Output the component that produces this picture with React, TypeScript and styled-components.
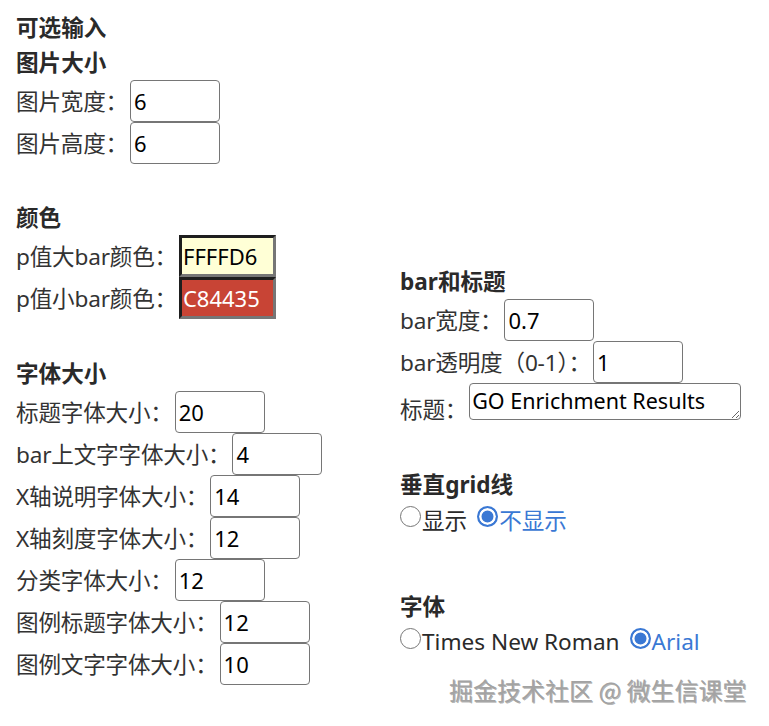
import React from "react";
import styled, { createGlobalStyle } from "styled-components";

const Global = createGlobalStyle`
  html, body { margin: 0; padding: 0; background: #fff; }
  body {
    font-family: "Noto Sans", "Noto Sans CJK SC", sans-serif;
    color: #333;
  }
`;

const Page = styled.div`
  position: relative;
  box-sizing: border-box;
  width: 769px;
  height: 726px;
  padding: 10px 0 0 16px;
  display: grid;
  grid-template-columns: 384px 1fr;
  overflow: hidden;
`;

const Column = styled.div<{ $top?: number }>`
  display: flex;
  flex-direction: column;
  padding-top: ${(p) => p.$top ?? 0}px;
`;

const Heading = styled.div`
  font-weight: 700;
  font-size: 22.6px;
  line-height: 35px;
  height: 35px;
  color: #2a2a2a;
  white-space: nowrap;
`;

const Spacer = styled.div<{ $h: number }>`
  height: ${(p) => p.$h}px;
  flex: none;
`;

const Row = styled.div<{ $align?: string }>`
  display: flex;
  align-items: ${(p) => p.$align ?? "center"};
  gap: 2px;
  min-height: 42px;
`;

const Label = styled.label<{ $offset?: number }>`
  font-size: 22.6px;
  line-height: 35px;
  white-space: nowrap;
  letter-spacing: -0.2px;
  margin-top: ${(p) => p.$offset ?? 0}px;
`;

const NumInput = styled.input`
  box-sizing: border-box;
  width: 90px;
  height: 42px;
  border: 1px solid #767676;
  border-radius: 4px;
  padding: 0 3px;
  font-family: "Noto Sans", sans-serif;
  font-size: 22px;
  color: #000;
  background: #fff;
  outline: none;
`;

const ColorInput = styled.input<{ $bg: string; $fg: string }>`
  box-sizing: border-box;
  width: 97px;
  height: 42px;
  border: 3px solid;
  border-color: #1e1e1e #767676 #767676 #1e1e1e;
  padding: 0 1px;
  font-family: "Noto Sans", sans-serif;
  font-size: 22px;
  background: ${(p) => p.$bg};
  color: ${(p) => p.$fg};
  outline: none;
`;

const TextArea = styled.textarea`
  box-sizing: border-box;
  width: 272px;
  height: 37px;
  border: 1px solid #767676;
  border-radius: 4px;
  padding: 0 2px;
  font-family: "Noto Sans", sans-serif;
  font-size: 21.5px;
  line-height: 34px;
  color: #000;
  overflow: hidden;
  outline: none;
`;

const RadioRow = styled.div`
  display: flex;
  align-items: center;
  height: 35px;
  font-size: 22.6px;
`;

const RadioOption = styled.label<{ $checked: boolean }>`
  display: inline-flex;
  align-items: center;
  margin-right: 10px;
  color: ${(p) => (p.$checked ? "#3a78d4" : "#2a2a2a")};
  white-space: nowrap;
`;

const RadioDot = styled.input`
  appearance: none;
  box-sizing: border-box;
  flex: none;
  width: 21px;
  height: 21px;
  margin: 0 1px 0 0;
  position: relative;
  top: -3px;
  border-radius: 50%;
  border: 1.5px solid #767676;
  background: #fff;
  &:checked {
    border: 2px solid #3a78d4;
    background: #3a78d4;
    box-shadow: inset 0 0 0 2.5px #fff;
  }
`;

const Watermark = styled.div`
  position: absolute;
  left: 449px;
  top: 673px;
  font-family: "Noto Sans CJK SC", sans-serif;
  font-weight: 400;
  font-size: 24px;
  line-height: 34px;
  color: #a3a3a3;
  text-shadow: 1px 1px 0 rgba(0, 0, 0, 0.3);
  white-space: nowrap;
`;

type Radio = { label: string; checked: boolean };

const RadioGroup = ({ name, options }: { name: string; options: Radio[] }) => (
  <RadioRow>
    {options.map((o) => (
      <RadioOption key={o.label} $checked={o.checked}>
        <RadioDot type="radio" name={name} defaultChecked={o.checked} />
        {o.label}
      </RadioOption>
    ))}
  </RadioRow>
);

const NumField = ({ label, value }: { label: string; value: string }) => (
  <Row>
    <Label>{label}</Label>
    <NumInput type="text" defaultValue={value} />
  </Row>
);

const fontSizes: [string, string][] = [
  ["标题字体大小：", "20"],
  ["bar上文字字体大小：", "4"],
  ["X轴说明字体大小：", "14"],
  ["X轴刻度字体大小：", "12"],
  ["分类字体大小：", "12"],
  ["图例标题字体大小：", "12"],
  ["图例文字字体大小：", "10"],
];

export default function App() {
  return (
    <>
      <Global />
      <Page>
        <Column>
          <Heading>可选输入</Heading>
          <Heading>图片大小</Heading>
          <NumField label="图片宽度：" value="6" />
          <NumField label="图片高度：" value="6" />
          <Spacer $h={36} />
          <Heading>颜色</Heading>
          <Row>
            <Label>p值大bar颜色：</Label>
            <ColorInput type="text" defaultValue="FFFFD6" $bg="#FFFFD6" $fg="#000" />
          </Row>
          <Row>
            <Label>p值小bar颜色：</Label>
            <ColorInput type="text" defaultValue="C84435" $bg="#C84435" $fg="#fff" />
          </Row>
          <Spacer $h={37} />
          <Heading>字体大小</Heading>
          {fontSizes.map(([l, v]) => (
            <NumField key={l} label={l} value={v} />
          ))}
        </Column>
        <Column $top={254}>
          <Heading>bar和标题</Heading>
          <NumField label="bar宽度：" value="0.7" />
          <NumField label="bar透明度（0-1）：" value="1" />
          <Row $align="flex-start">
            <Label $offset={9}>标题：</Label>
            <TextArea defaultValue="GO Enrichment Results" />
          </Row>
          <Spacer $h={40} />
          <Heading>垂直grid线</Heading>
          <RadioGroup
            name="grid"
            options={[
              { label: "显示", checked: false },
              { label: "不显示", checked: true },
            ]}
          />
          <Spacer $h={52} />
          <Heading>字体</Heading>
          <RadioGroup
            name="font"
            options={[
              { label: "Times New Roman", checked: false },
              { label: "Arial", checked: true },
            ]}
          />
        </Column>
        <Watermark>掘金技术社区 @ 微生信课堂</Watermark>
      </Page>
    </>
  );
}
